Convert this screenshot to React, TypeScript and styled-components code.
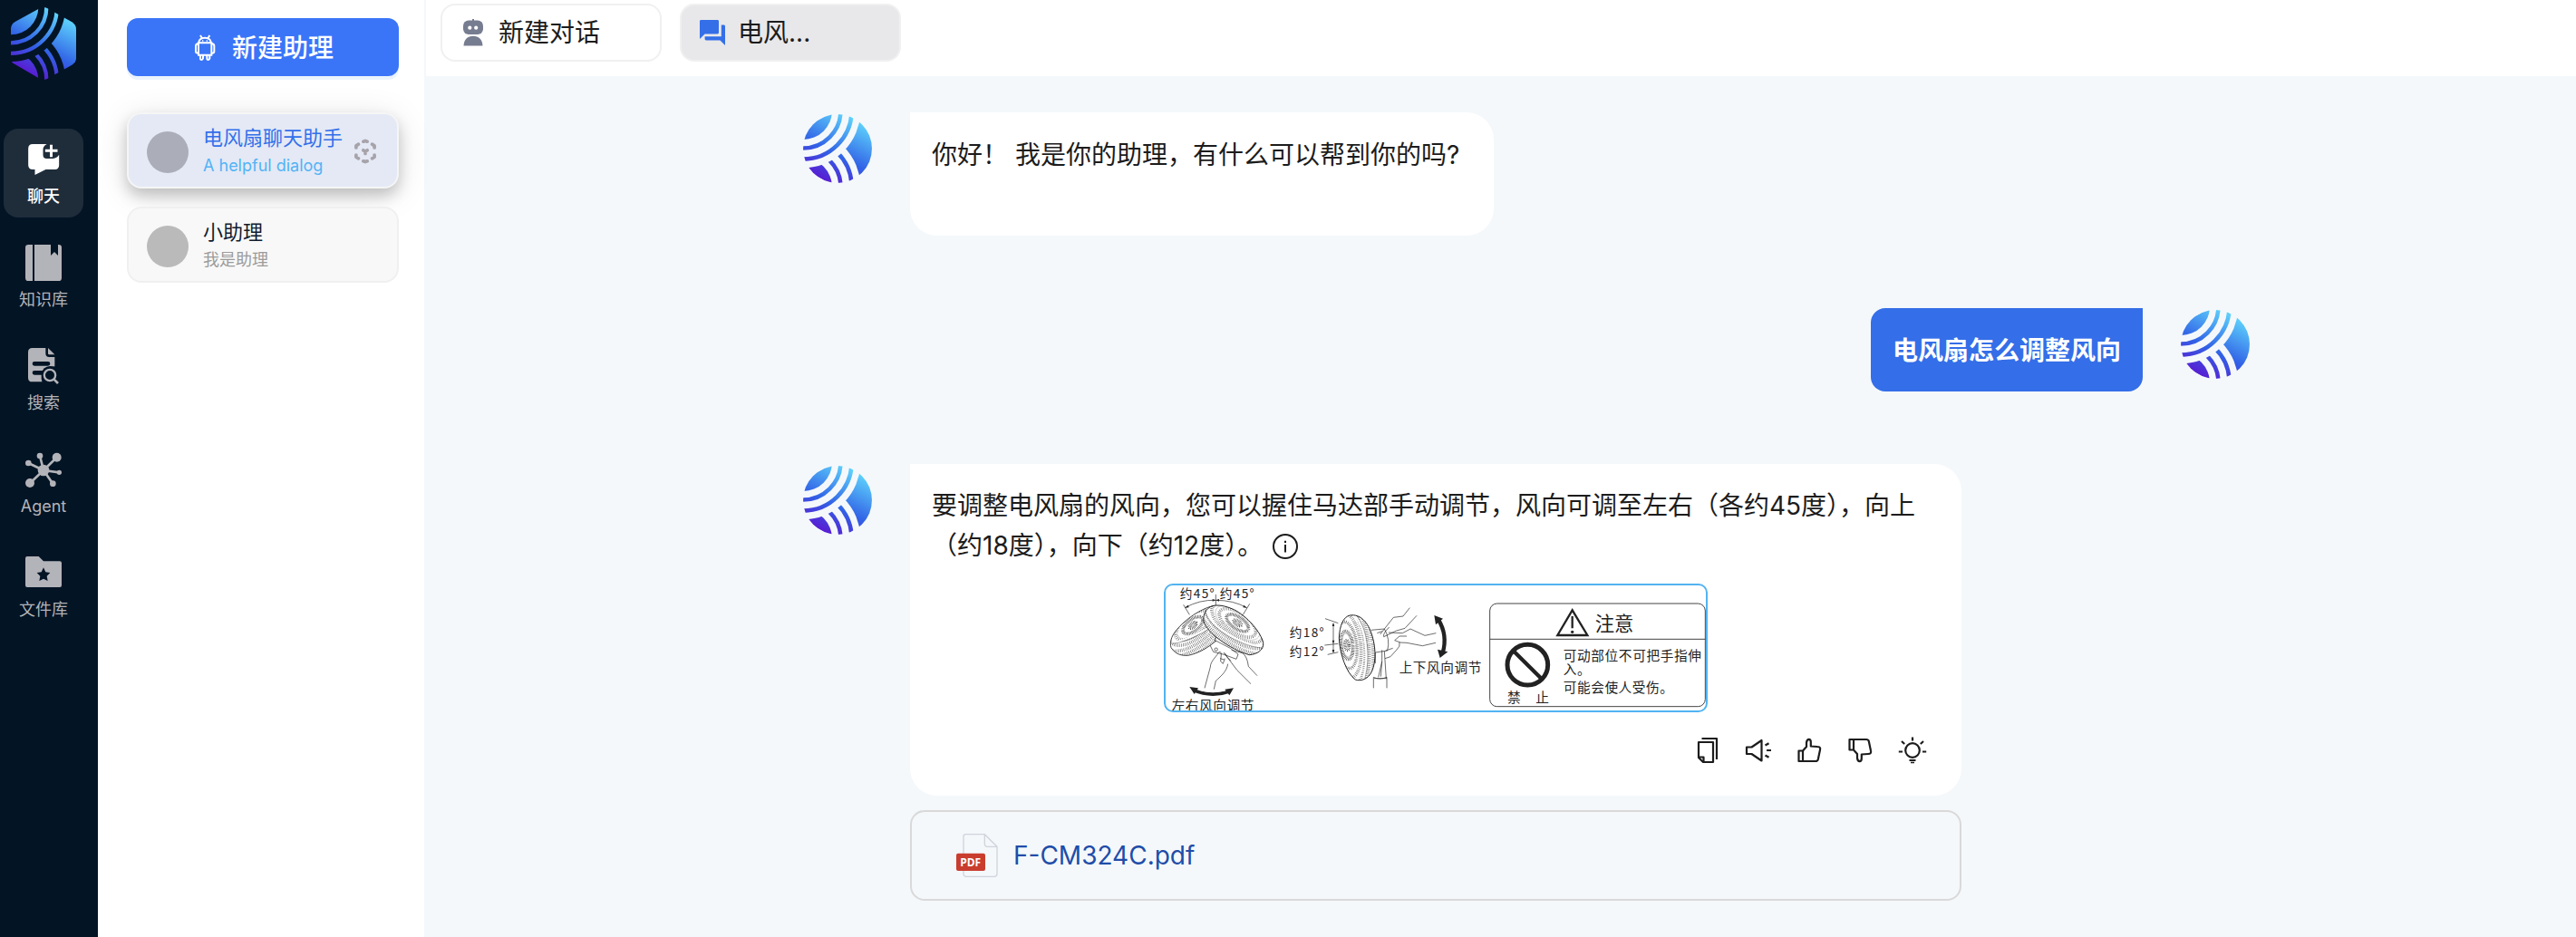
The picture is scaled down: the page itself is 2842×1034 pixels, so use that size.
import React from "react";
import styled, { createGlobalStyle } from "styled-components";

const Global = createGlobalStyle`
  * { box-sizing: border-box; }
  html, body { margin: 0; padding: 0; overflow: hidden; }
  body {
    font-family: Inter, "Noto Sans CJK SC", sans-serif;
    color: #1c1c1c;
    background: #f4f8fb;
  }
  svg { display: block; flex: none; }
`;

const Shell = styled.div`
  display: flex;
  width: 100%;
  height: 1034px;
  background: #f4f8fb;
`;

/* ---------- navigation rail ---------- */

const Rail = styled.nav`
  width: 108px;
  flex: none;
  display: flex;
  flex-direction: column;
  background: #031425;
  padding: 8px 0 0 4px;
`;

const RailLogo = styled.div`
  width: 72px;
  height: 80px;
  margin: 0 0 54px 8px;
`;

const NavList = styled.div`
  display: flex;
  flex-direction: column;
  gap: 16px;
`;

const NavItem = styled.div<{ $active?: boolean }>`
  width: 88px;
  height: 98px;
  border-radius: 16px;
  display: flex;
  flex-direction: column;
  align-items: center;
  background: ${(p) => (p.$active ? "#1f2d3b" : "transparent")};
  color: ${(p) => (p.$active ? "#ffffff" : "#b3b4b9")};
`;

const NavGlyph = styled.div`
  height: 52px;
  padding-top: 16px;
  display: flex;
  align-items: center;
  justify-content: center;
`;

const NavLabel = styled.span<{ $strong?: boolean }>`
  margin-top: 10px;
  font-size: 18px;
  line-height: 26px;
  font-weight: ${(p) => (p.$strong ? 500 : 400)};
`;

/* ---------- assistant list ---------- */

const Panel = styled.aside`
  width: 360px;
  flex: none;
  background: #ffffff;
  padding: 20px 28px 0 32px;
  display: flex;
  flex-direction: column;
`;

const CreateButton = styled.button`
  width: 300px;
  height: 64px;
  border: 0;
  border-radius: 12px;
  background: #3a75f8;
  box-shadow: 0 4px 0 #eaf3fd;
  color: #ffffff;
  font-family: inherit;
  font-size: 28px;
  font-weight: 500;
  line-height: 40px;
  padding: 1px 0 0 2px;
  display: flex;
  align-items: center;
  justify-content: center;
  gap: 18px;
`;

const CardList = styled.div`
  margin-top: 40px;
  display: flex;
  flex-direction: column;
  gap: 20px;
`;

const Card = styled.div<{ $active?: boolean }>`
  width: 300px;
  height: 84px;
  border-radius: 16px;
  border: 2px solid ${(p) => (p.$active ? "#f5f5f5" : "#f0f0f0")};
  background: ${(p) => (p.$active ? "#e4e9f5" : "#f8f8f8")};
  box-shadow: ${(p) =>
    p.$active ? "0 8px 16px rgba(0,0,0,.2), 0 6px 38px rgba(0,0,0,.11)" : "none"};
  display: flex;
  align-items: center;
  padding: 0 20px;
`;

const Dot = styled.div<{ $active?: boolean }>`
  width: 46px;
  height: 46px;
  margin-top: 4px;
  border-radius: 50%;
  flex: none;
  background: ${(p) => (p.$active ? "#abaeb8" : "#bababa")};
`;

const CardText = styled.div`
  margin: 1px 0 0 16px;
  width: 166px;
  display: flex;
  flex-direction: column;
`;

const CardTitle = styled.span<{ $active?: boolean }>`
  font-size: 22px;
  line-height: 32px;
  white-space: nowrap;
  color: ${(p) => (p.$active ? "#3370ea" : "#111c2f")};
`;

const CardSub = styled.span<{ $active?: boolean }>`
  margin-top: 1px;
  font-size: 18px;
  line-height: 28px;
  white-space: nowrap;
  color: ${(p) => (p.$active ? "#53b3f5" : "#9b9b9b")};
`;

const CardMark = styled.div`
  margin-top: 2px;
`;

/* ---------- main area ---------- */

const Main = styled.main`
  flex: 1;
  display: flex;
  flex-direction: column;
  padding-left: 2px;
`;

const TabBar = styled.header`
  height: 84px;
  background: #ffffff;
  padding: 4px 16px 16px;
  display: flex;
  gap: 20px;
`;

const Tab = styled.div<{ $active?: boolean }>`
  width: 244px;
  height: 64px;
  border: 2px solid #f0f0f0;
  border-radius: 16px;
  background: ${(p) => (p.$active ? "#e8e8ea" : "#ffffff")};
  display: flex;
  align-items: center;
  padding-left: ${(p) => (p.$active ? "20px" : "23px")};
  gap: ${(p) => (p.$active ? "14px" : "17px")};
  font-size: 28px;
  line-height: 40px;
`;

const Conversation = styled.section`
  width: 1600px;
  margin: 40px 0 0 414px;
  display: flex;
  flex-direction: column;
`;

const Row = styled.div<{ $mine?: boolean; $gap?: number }>`
  display: flex;
  align-items: flex-start;
  justify-content: ${(p) => (p.$mine ? "flex-end" : "flex-start")};
  gap: 40px;
  margin-bottom: ${(p) => p.$gap ?? 0}px;
`;

const Avatar = styled.div`
  width: 80px;
  height: 80px;
  flex: none;
  padding: 2px;
`;

const AvatarDisc = styled.div`
  width: 76px;
  height: 76px;
  border-radius: 50%;
  overflow: hidden;
  display: flex;
  align-items: center;
  justify-content: center;
`;

const Bubble = styled.div<{ $w: number; $h: number }>`
  width: ${(p) => p.$w}px;
  height: ${(p) => p.$h}px;
  background: #ffffff;
  border-radius: 0 30px 30px 30px;
  padding: 24px 24px 0;
  font-size: 28px;
  line-height: 44px;
  display: flex;
  flex-direction: column;
`;

const Paragraph = styled.p<{ $drop?: number }>`
  margin: 0;
  padding-top: ${(p) => p.$drop ?? 0}px;
`;

const InfoMark = styled.span`
  display: inline-block;
  vertical-align: -5px;
  margin-left: 11px;
`;

const MyBubble = styled.div`
  width: 300px;
  height: 92px;
  border-radius: 16px 0 16px 16px;
  background: #346ee8;
  color: #ffffff;
  font-size: 28px;
  font-weight: 700;
  line-height: 44px;
  padding-top: 1px;
  display: flex;
  align-items: center;
  justify-content: center;
`;

const Figure = styled.div`
  width: 600px;
  height: 142px;
  margin: 20px auto 0;
  border: 2px solid #53b3f1;
  border-radius: 10px;
  overflow: hidden;
  background: #ffffff;
`;

const Actions = styled.div`
  display: flex;
  justify-content: flex-end;
  gap: 24px;
  margin-top: 26px;
  padding-right: 14px;

  > :last-child {
    margin-left: 2px;
  }
`;

const FileBox = styled.div`
  width: 1160px;
  height: 100px;
  margin: 16px 0 0 120px;
  border: 2px solid #d9d9d9;
  border-radius: 16px;
  padding-left: 49px;
  display: flex;
  align-items: center;
  gap: 17px;
  font-size: 28px;
  color: #214ca8;
`;

/* ---------- drawings ---------- */

function Brand({ id, width, height }: { id: string; width: number; height: number }) {
  return (
    <svg width={width} height={height} viewBox="36 24 216 240">
      <defs>
        <linearGradient id={id + "g"} gradientUnits="userSpaceOnUse" x1="95" y1="237" x2="193" y2="51">
          <stop offset="0" stopColor="#571fd3" />
          <stop offset=".41" stopColor="#3162e6" />
          <stop offset="1" stopColor="#5dd0fb" />
        </linearGradient>
        <clipPath id={id + "h"}>
          <path d="M36 97 Q36 80 50 72 L132 27 Q144 21 156 27 L238 73 Q252 82 252 97 V193 Q252 207 238 215 L156 261 Q144 267 132 261 L46 211 Q36 205 36 193 Z" />
        </clipPath>
        <mask id={id + "m"} maskUnits="userSpaceOnUse" x="0" y="0" width="300" height="300">
          <rect width="300" height="300" fill="#fff" />
          <circle cx="36" cy="264" r="180" fill="#000" />
          <circle cx="36" cy="264" r="152.500" fill="none" stroke="#fff" strokeWidth="13" />
          <circle cx="36" cy="264" r="118" fill="none" stroke="#fff" strokeWidth="13" />
          <circle cx="36" cy="264" r="91" fill="#fff" />
          <circle cx="36" cy="24" r="180" fill="#000" />
          <circle cx="36" cy="24" r="152.500" fill="none" stroke="#fff" strokeWidth="13" />
          <circle cx="36" cy="24" r="118" fill="none" stroke="#fff" strokeWidth="13" />
          <circle cx="36" cy="24" r="91" fill="#fff" />
        </mask>
      </defs>
      <g clipPath={`url(#${id}h)`}>
        <rect x="36" y="20" width="216" height="248" fill={`url(#${id}g)`} mask={`url(#${id}m)`} />
      </g>
    </svg>
  );
}

const ChatIcon = () => (
  <svg width="35" height="34" viewBox="0 0 104 102" fill="currentColor">
    <path d="M15 0H62C54 4 49 10 49 18V36Q49 48 61 48H82Q95 46 102 35V70Q102 84 88 84H58L22 102V84H15Q0 84 0 69V15Q0 0 15 0Z" />
    <path d="M76 2V43M56 22H97" stroke="currentColor" strokeWidth="9" />
  </svg>
);

const BookIcon = () => (
  <svg width="40" height="40" viewBox="0 0 120 120" fill="currentColor">
    <path d="M10 0H24V120H10Q0 120 0 110V10Q0 0 10 0Z" />
    <path d="M30 0H84V36L96 24L108 36V0H110Q120 0 120 10V110Q120 120 110 120H30Z" />
  </svg>
);

const SearchDocIcon = () => (
  <svg width="34" height="40" viewBox="0 0 102 120" fill="currentColor">
    <path d="M14 0H58V18Q58 30 70 30H88V112H14Q0 112 0 98V14Q0 0 14 0Z" />
    <path d="M66 0L88 22H70Q66 22 66 18Z" />
    <path d="M21 52H66M21 82H50" stroke="#031425" strokeWidth="14" strokeLinecap="round" />
    <path d="M48 120Q42 104 44 84Q50 62 72 60L102 62V120Z" fill="#031425" />
    <circle cx="72" cy="90" r="18.500" fill="none" stroke="currentColor" strokeWidth="7" />
    <path d="M85 103L99 117" stroke="currentColor" strokeWidth="8" />
  </svg>
);

const HubIcon = () => (
  <svg width="40" height="40" viewBox="84 474 120 120" fill="currentColor">
    <path
      d="M144 537L132 489M144 537L188 494M144 537L94 513M144 537L196 544M144 537L99 580M144 537L175 581"
      stroke="currentColor"
      strokeWidth="8"
    />
    <circle cx="144" cy="537" r="19" />
    <circle cx="132" cy="489" r="10" />
    <circle cx="188" cy="494" r="15" />
    <circle cx="94" cy="513" r="10" />
    <circle cx="196" cy="544" r="8" />
    <circle cx="99" cy="579" r="15" />
    <circle cx="175" cy="581" r="10" />
  </svg>
);

const FolderIcon = () => (
  <svg width="40" height="36" viewBox="0 0 120 108" fill="currentColor">
    <path d="M6 0H44L60 16H114Q120 16 120 22V96Q120 102 114 102H6Q0 102 0 96V6Q0 0 6 0Z" />
    <path
      d="M60 37L67 52L82 54L71 65L74 81L60 74L46 81L49 65L38 54L53 52Z"
      fill="#031425"
    />
  </svg>
);

const AndroidIcon = () => (
  <svg width="24" height="30" viewBox="642 111 72 90" fill="none" stroke="#fff" strokeWidth="6">
    <path d="M657 139Q659 122 678 122T699 139ZM657 139H700V179H657ZM663 114L669 124M694 114L688 124" />
    <path d="M656 141Q648 143 648 149V167Q648 173 656 173M701 141Q709 143 709 149V167Q709 173 701 173" />
    <path d="M663 180V190Q663 195 667 195T672 190V180M685 180V190Q685 195 689 195T694 190V180" />
    <path d="M669 132H673M683 132H687" strokeWidth="4" />
  </svg>
);

const CubeIcon = () => (
  <svg width="26" height="28" viewBox="0 0 26 28" fill="none" stroke="#a7a3aa" strokeWidth="3.700" strokeLinecap="round" strokeLinejoin="round">
    <path d="M10.800 3.200L13 2.400L15.200 3.200M20.500 6.200L23.100 7.800V10M23.100 18V20.200L20.500 21.800M15.200 24.800L13 25.600L10.800 24.800M5.500 21.800L2.900 20.200V18M2.900 10V7.800L5.500 6.200M10.800 12.800L13 14L15.200 12.800M13 14V16.500" />
  </svg>
);

const BotIcon = () => (
  <svg width="22" height="30" viewBox="0 0 22 30" fill="#777d90">
    <path d="M10 0H12V3H10Z" />
    <rect x="0" y="1.500" width="22" height="15.500" rx="6" />
    <path d="M.5 29.500C.8 22.500 5 18.800 11 18.800S21.200 22.500 21.500 29.500Z" />
    <circle cx="7.300" cy="9.700" r="2.100" fill="#fff" />
    <circle cx="14.200" cy="9.700" r="2.100" fill="#fff" />
  </svg>
);

const ForumIcon = () => (
  <svg width="28" height="28" viewBox="2 2 20 20" fill="#346fe8">
    <path d="M21 6h-2v9H6v2c0 .55.45 1 1 1h11l4 4V7c0-.55-.45-1-1-1zm-4 6V3c0-.55-.45-1-1-1H3c-.55 0-1 .45-1 1v14l4-4h10c.55 0 1-.45 1-1z" />
  </svg>
);

const InfoIcon = () => (
  <svg width="28" height="28" viewBox="0 0 28 28" fill="none" stroke="#1c1c1c" strokeWidth="2">
    <circle cx="14" cy="14" r="13" />
    <path d="M14 12V20.500M14 7.800V10" />
  </svg>
);

const PdfIcon = () => (
  <svg width="46" height="48" viewBox="0 0 138 144">
    <path d="M32 2H94L135 43V132Q135 142 125 142H34Q24 142 24 132V10Q24 2 32 2Z" fill="#f4f8fb" stroke="#d0d4db" strokeWidth="4" />
    <path d="M94 2V33Q94 43 104 43H135" fill="none" stroke="#d0d4db" strokeWidth="4" />
    <rect x="0" y="65" width="96" height="58" rx="6" fill="#c93d2e" />
    <text x="47" y="107" fill="#fff" fontFamily="Open Sans, sans-serif" fontWeight="700" fontSize="36" textAnchor="middle">
      PDF
    </text>
  </svg>
);

type ActionKind = "copy" | "speak" | "up" | "down" | "bulb";

const ACTION_PATHS: Record<ActionKind, React.ReactNode> = {
  copy: (
    <>
      <path d="M6 7H22V29H11L6 24Z" />
      <path d="M6 23.500H11.500V29M9.500 3H26V26" />
    </>
  ),
  speak: (
    <path d="M3 12.500H8.500L19.500 5V27.500L8.500 20H3ZM23.500 10.500L27.500 8.200M25 16H30M23.500 21.500L27.500 23.800" />
  ),
  up: (
    <path d="M4.500 16.500H9V28H4.500ZM9 16.500L13 12V7.500Q13.500 3.700 16 3.900Q18 4.300 17.800 7.500V11.500L25 12Q29 12 28 15.500L25.800 26Q25.300 28 23 28H9" />
  ),
  down: (
    <path d="M4.500 15.500H9V4H4.500ZM9 15.500L13 20V24.500Q13.500 28.300 16 28.100Q18 27.700 17.800 24.500V20.500L25 20Q29 20 28 16.500L25.800 6Q25.300 4 23 4H9" />
  ),
  bulb: (
    <>
      <circle cx="16" cy="16" r="7.800" />
      <path d="M16 1.500V5.500M.8 17.500H5M27 17.500H31.200M4 6L7.200 9M28 6L24.800 9M12.500 27H19.500" />
      <path d="M14 29.500H18" strokeWidth="1.500" />
    </>
  ),
};

const ActionIcon = ({ kind }: { kind: ActionKind }) => (
  <svg width="32" height="32" viewBox="0 0 32 32" fill="none" stroke="#1c1c1c" strokeWidth="2.200" strokeLinejoin="round">
    {ACTION_PATHS[kind]}
  </svg>
);

const range = (n: number) => Array.from({ length: n }, (_, i) => i);

type MeshProps = {
  cx: number;
  cy: number;
  rx: number;
  ry: number;
  rotate: number;
  clip: string;
  step: number;
};

/* Wire guard of a fan: rows of short ribs around the hub, with thin hoops between them. */
function Mesh({ cx, cy, rx, ry, rotate, clip, step }: MeshProps) {
  return (
    <g clipPath={`url(#${clip})`} fill="none" stroke="#444">
      <g transform={`translate(${cx} ${cy}) rotate(${rotate})`}>
        {range(9).map((i) => {
          const dx = step * (i + 0.5);
          return (
            <ellipse
              key={i}
              rx={dx * (rx / Math.min(rx, ry))}
              ry={dx * (ry / Math.min(rx, ry))}
              strokeWidth={step * 0.86}
              strokeDasharray={i < 2 ? "1.700 2.600" : "1.500 4.300"}
              strokeDashoffset={i * 1.3}
            />
          );
        })}
        {[0.35, 0.7].map((k) => (
          <ellipse key={k} rx={rx * k} ry={ry * k} strokeWidth="1" stroke="#777" />
        ))}
      </g>
    </g>
  );
}

const BACK_DISC =
  "M204 116C165 125 112 160 82 198C66 218 61 238 66 254C80 275 98 281 122 280C160 272 190 252 212 234L220 160Z";
const FRONT_DISC =
  "M214 114C186 116 170 140 174 168C186 205 258 258 325 278C350 276 374 262 371 238C364 204 318 150 274 128C252 118 232 113 214 114Z";
const SIDE_DISC =
  "M658 147C692 142 718 168 732 216C746 262 744 316 724 344C710 361 692 365 676 360C646 338 624 274 622 222C624 180 636 152 658 147Z";

function Manual() {
  const ink = "#222";
  return (
    <svg width="596" height="138" viewBox="48 48 1788 414" fontFamily="Noto Sans CJK SC, sans-serif" fill={ink}>
      <defs>
        <clipPath id="disc-a"><path d={BACK_DISC} /></clipPath>
        <clipPath id="disc-b"><path d={FRONT_DISC} /></clipPath>
        <clipPath id="disc-c"><path d={SIDE_DISC} /></clipPath>
      </defs>

      <g fontSize="41">
        <text x="95" y="90" textLength="114">约45°</text>
        <text x="227" y="90" textLength="114">约45°</text>
        <text x="458" y="219" textLength="114">约18°</text>
        <text x="458" y="281" textLength="114">约12°</text>
      </g>

      <g fill="none" stroke={ink} strokeWidth="2">
        <path d="M214 78V114M112 122Q160 95 214 97Q272 97 317 122M107 112L127 145M326 109L304 145" />
        <path d="M576 158L619 173M574 246L619 241M584 277L619 269M603 174V270" />
      </g>
      <path d="M112 122l10-9 3 8zM214 97l-11-4v8zM214 97l11-4v8zM317 122l-10-9-3 8zM603 172l-4 11h8zM603 241l-4-11h8zM603 272l-4-11h8z" />

      <path d="M192 240L206 268L238 276L282 292L288 276L262 256L216 232Z" fill="#fff" stroke={ink} strokeWidth="2" />
      <circle cx="215" cy="260" r="5" fill="none" stroke={ink} strokeWidth="2" />

      <path d={BACK_DISC} fill="#fff" />
      <Mesh cx={138} cy={180} rx={104} ry={52} rotate={-38} clip="disc-a" step={13} />
      <path d="M68 236C90 238 160 212 206 176" fill="none" stroke="#fff" strokeWidth="6" />
      <path d="M67 240C92 243 162 216 208 180" fill="none" stroke={ink} strokeWidth="1.200" />
      <path d={BACK_DISC} fill="none" stroke={ink} strokeWidth="2.500" />
      <path d={FRONT_DISC} fill="#fff" />
      <Mesh cx={286} cy={172} rx={120} ry={56} rotate={34} clip="disc-b" step={13} />
      <path d="M184 134C192 180 290 242 366 250" fill="none" stroke="#fff" strokeWidth="6" />
      <path d="M181 137C189 185 288 247 364 255" fill="none" stroke={ink} strokeWidth="1.200" />
      <path d={FRONT_DISC} fill="none" stroke={ink} strokeWidth="3" />

      <g fill="none" stroke={ink} strokeWidth="2">
        <path d="M177 388L196 318C196 300 214 286 222 272Q230 262 232 276L230 300L238 307L244 290M208 392L214 364C234 346 250 332 254 308M240 270L284 328L330 374M266 262L302 272Q318 282 322 316L351 347M244 272Q252 288 264 298M228 290L242 294" />
        <path d="M728 196L772 192Q792 226 782 264L742 270M742 270V306M764 262V300L752 352M772 266L778 356M736 388V352Q756 362 780 352V388M738 356H780M760 350L764 300" />
        <path d="M758 210L802 154L834 150L856 122M770 218Q766 208 788 186M770 218L812 198L840 190L879 148" />
        <path d="M786 204L832 206L858 192L906 214L943 206M806 230L822 216L846 216M806 230Q824 240 846 238L898 248L942 238" />
        <path d="M822 236Q826 250 812 262L792 284L774 290M748 206L764 200M776 264L800 256" />
      </g>

      <path d={SIDE_DISC} fill="#fff" />
      <Mesh cx={648} cy={246} rx={46} ry={110} rotate={-7} clip="disc-c" step={13} />
      <path d="M674 147C712 190 722 286 702 358" fill="none" stroke="#fff" strokeWidth="6" />
      <path d="M679 147C717 190 727 286 707 357" fill="none" stroke={ink} strokeWidth="1.200" />
      <path d={SIDE_DISC} fill="none" stroke={ink} strokeWidth="3" />

      <path d="M140 395Q200 420 262 398" fill="none" stroke={ink} strokeWidth="11" />
      <path d="M127 384L156 388L143 408ZM273 388L244 392L259 412Z" />
      <path d="M951 162Q982 212 965 272" fill="none" stroke={ink} strokeWidth="13" />
      <path d="M937 147L966 158L942 178ZM956 288L948 260L982 268Z" />

      <g fontSize="44">
        <text x="68" y="463" textLength="272">左右风向调节</text>
        <text x="821" y="337" textLength="272">上下风向调节</text>
        <text x="1364" y="297" textLength="457">可动部位不可把手指伸</text>
        <text x="1364" y="342" textLength="90">入。</text>
        <text x="1364" y="403" textLength="364">可能会使人受伤。</text>
        <text x="1179" y="434">禁</text>
        <text x="1273" y="434">止</text>
      </g>
      <text x="1469" y="199" fontSize="64">注意</text>

      <g fill="none" stroke="#444">
        <rect x="1121" y="108" width="713" height="341" rx="24" strokeWidth="3" />
        <path d="M1121 226H1834" strokeWidth="3" />
      </g>
      <path d="M1394 130L1345 213H1444Z" fill="none" stroke={ink} strokeWidth="7" />
      <path d="M1394 150V190" stroke={ink} strokeWidth="7" />
      <circle cx="1394" cy="202" r="5" />
      <circle cx="1246" cy="311" r="67" fill="none" stroke={ink} strokeWidth="15" />
      <path d="M1199 265L1292 357" stroke={ink} strokeWidth="13" />
    </svg>
  );
}

/* ---------- data ---------- */

const NAV = [
  { label: "聊天", icon: <ChatIcon />, active: true },
  { label: "知识库", icon: <BookIcon /> },
  { label: "搜索", icon: <SearchDocIcon /> },
  { label: "Agent", icon: <HubIcon /> },
  { label: "文件库", icon: <FolderIcon /> },
];

const ASSISTANTS = [
  { title: "电风扇聊天助手", sub: "A helpful dialog", active: true },
  { title: "小助理", sub: "我是助理" },
];

const ACTIONS: ActionKind[] = ["copy", "speak", "up", "down", "bulb"];

const BrandAvatar = ({ id }: { id: string }) => (
  <Avatar>
    <AvatarDisc>
      <Brand id={id} width={76} height={84.4} />
    </AvatarDisc>
  </Avatar>
);

export default function App() {
  return (
    <Shell>
      <Global />
      <Rail>
        <RailLogo>
          <Brand id="rail" width={72} height={80} />
        </RailLogo>
        <NavList>
          {NAV.map((n) => (
            <NavItem key={n.label} $active={n.active}>
              <NavGlyph>{n.icon}</NavGlyph>
              <NavLabel $strong={n.active}>{n.label}</NavLabel>
            </NavItem>
          ))}
        </NavList>
      </Rail>

      <Panel>
        <CreateButton>
          <AndroidIcon />
          新建助理
        </CreateButton>
        <CardList>
          {ASSISTANTS.map((a) => (
            <Card key={a.title} $active={a.active}>
              <Dot $active={a.active} />
              <CardText>
                <CardTitle $active={a.active}>{a.title}</CardTitle>
                <CardSub $active={a.active}>{a.sub}</CardSub>
              </CardText>
              {a.active && (
                <CardMark>
                  <CubeIcon />
                </CardMark>
              )}
            </Card>
          ))}
        </CardList>
      </Panel>

      <Main>
        <TabBar>
          <Tab>
            <BotIcon />
            新建对话
          </Tab>
          <Tab $active>
            <ForumIcon />
            电风...
          </Tab>
        </TabBar>

        <Conversation>
          <Row $gap={80}>
            <BrandAvatar id="a1" />
            <Bubble $w={644} $h={136}>
              <Paragraph $drop={1}>你好！ 我是你的助理，有什么可以帮到你的吗?</Paragraph>
            </Bubble>
          </Row>

          <Row $mine $gap={80}>
            <MyBubble>电风扇怎么调整风向</MyBubble>
            <BrandAvatar id="a2" />
          </Row>

          <Row>
            <BrandAvatar id="a3" />
            <Bubble $w={1160} $h={366}>
              <Paragraph>
                要调整电风扇的风向，您可以握住马达部手动调节，风向可调至左右（各约45度），向上（约18度），向下（约12度）。
                <InfoMark>
                  <InfoIcon />
                </InfoMark>
              </Paragraph>
              <Figure>
                <Manual />
              </Figure>
              <Actions>
                {ACTIONS.map((k) => (
                  <ActionIcon key={k} kind={k} />
                ))}
              </Actions>
            </Bubble>
          </Row>

          <FileBox>
            <PdfIcon />
            F-CM324C.pdf
          </FileBox>
        </Conversation>
      </Main>
    </Shell>
  );
}
